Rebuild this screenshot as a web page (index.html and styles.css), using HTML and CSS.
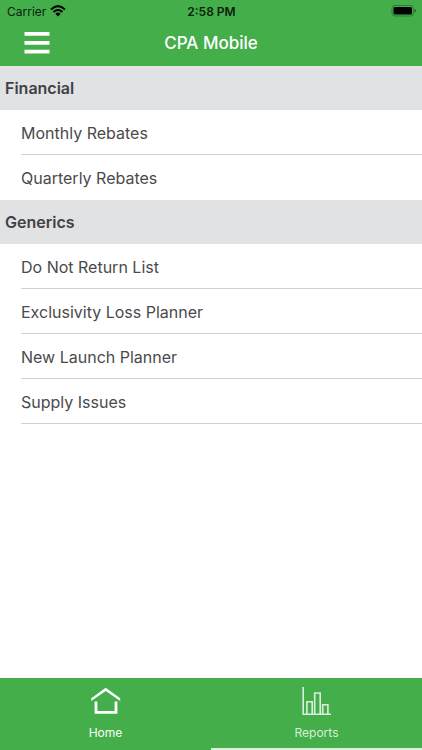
FILE: index.html
```html
<!DOCTYPE html>
<html lang="en">
<head>
<meta charset="utf-8">
<meta name="viewport" content="width=device-width, initial-scale=1">
<title>CPA Mobile</title>
<link rel="stylesheet" href="styles.css">
</head>
<body>
<header class="top">
  <div class="status">
    <div class="carrier">
      <span>Carrier</span>
      <svg width="16" height="12" viewBox="0 0 16 12" fill="none" stroke="#000" stroke-width="2" aria-hidden="true">
        <path d="M1 4.4Q8-2.1 15 4.4M3.5 7Q8 3 12.500 7"/>
        <path d="M5.300 8.700Q8 6.500 10.700 8.700L8 11.400Z" fill="#000" stroke="none"/>
      </svg>
    </div>
    <time class="clock">2:58 PM</time>
    <svg class="battery" width="26" height="12" viewBox="0 0 26 12" aria-hidden="true">
      <rect x="2" y=".5" width="21.500" height="10.500" rx="3" fill="none" stroke="#2b7a31"/>
      <rect x="3.500" y="2" width="18.500" height="7.500" rx="1.500"/>
      <path d="M24.700 4v3.500q1.300-.5 1.300-1.750T24.700 4Z" fill="#1d5a22"/>
    </svg>
  </div>
  <div class="nav">
    <button class="menu" type="button" aria-label="Menu">
      <svg width="26" height="22" viewBox="0 0 26 22" fill="#fff" aria-hidden="true">
        <path d="M.5 0h25v3.700H.5zM.5 9h25v3.700H.5zM.5 17.700h25v3.700H.5z"/>
      </svg>
    </button>
    <h1 class="title">CPA Mobile</h1>
  </div>
</header>
<main class="content">
  <section>
    <h2 class="group">Financial</h2>
    <ul class="list">
      <li><a href="#monthly">Monthly Rebates</a></li>
      <li><a href="#quarterly">Quarterly Rebates</a></li>
    </ul>
  </section>
  <section>
    <h2 class="group">Generics</h2>
    <ul class="list">
      <li><a href="#return">Do Not Return List</a></li>
      <li><a href="#exclusivity">Exclusivity Loss Planner</a></li>
      <li><a href="#launch">New Launch Planner</a></li>
      <li><a href="#supply">Supply Issues</a></li>
    </ul>
  </section>
</main>
<nav class="tabs">
  <a class="tab current" href="#home" aria-current="page">
    <svg width="30" height="30" viewBox="0 0 30 30" fill="none" stroke="#fff" aria-hidden="true">
      <path d="M.3 15V12.200L14.700 1.800 29.200 12.200V15L14.700 5Z" fill="#fff" stroke="none"/>
      <path d="M5 15.500V26.300H25V15.500" stroke-width="2.800"/>
    </svg>
    <span>Home</span>
  </a>
  <a class="tab" href="#reports">
    <svg width="30" height="30" viewBox="0 0 30 30" fill="none" stroke="#dceedd" stroke-width="1.600" aria-hidden="true">
      <path d="M1.200 1V28.200H29M4.900 28V15.800H10.200V28M12.700 28V7H18.200V28M20.700 28V18.700H25.900V28"/>
    </svg>
    <span>Reports</span>
  </a>
</nav>
</body>
</html>
```
FILE: styles.css
```css
* {
  box-sizing: border-box;
}

body {
  margin: 0;
  min-height: 100vh;
  display: flex;
  flex-direction: column;
  background: #fff;
  color: #4a4a4c;
  font-family: Inter, "Liberation Sans", sans-serif;
  font-size: 16px;
}

h1, h2, ul {
  margin: 0;
  padding: 0;
}

a {
  color: inherit;
  text-decoration: none;
}

svg {
  display: block;
}

.top {
  background: #43ae4a;
}

.status {
  display: grid;
  grid-template-columns: 1fr auto 1fr;
  align-items: center;
  height: 22px;
  padding: 0 6px 0 7px;
  color: #0b1f0c;
  font-size: 12px;
}

.carrier {
  display: flex;
  align-items: center;
  gap: 4px;
}

.clock {
  font-weight: 600;
}

.battery {
  justify-self: end;
}

.nav {
  display: grid;
  grid-template-columns: 1fr auto 1fr;
  align-items: center;
  height: 44px;
  padding: 0 24px 2px;
}

.menu {
  justify-self: start;
  padding: 0;
  border: 0;
  background: none;
}

.title {
  color: #fff;
  font-size: 17px;
  font-weight: 500;
}

.content {
  flex: 1;
}

.group {
  height: 44px;
  padding-left: 5px;
  background: #e1e2e4;
  color: #404144;
  font-size: 16px;
  font-weight: 600;
  line-height: 44px;
}

.list {
  padding-left: 21px;
  list-style: none;
}

.list li {
  height: 45px;
  border-bottom: 1px solid #d0d0d2;
}

section:first-child li:last-child {
  border-bottom: 0;
}

.list a {
  display: block;
  line-height: 46px;
}

.tabs {
  display: flex;
  height: 72px;
  background: #43ae4a;
}

.tab {
  flex: 1;
  display: flex;
  flex-direction: column;
  align-items: center;
  gap: 8px;
  padding-top: 8px;
  border-bottom: 2px solid #dceedd;
  color: #dceedd;
  font-size: 12px;
  line-height: 18px;
}

.tab.current {
  border-color: transparent;
  color: #fff;
}
```
